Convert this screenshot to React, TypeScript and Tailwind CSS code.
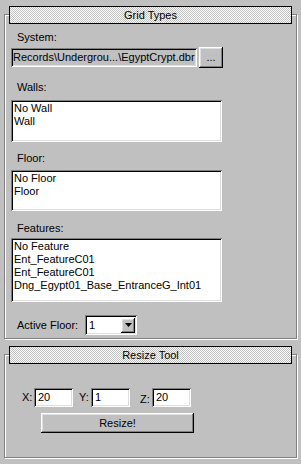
import React from 'react'

const sunken =
  'shadow-[inset_1px_1px_0_#808080,inset_-1px_-1px_0_#ffffff,inset_2px_2px_0_#000000,inset_-2px_-2px_0_#dfdfdf]'
const raised =
  'shadow-[inset_-1px_-1px_0_#000000,inset_1px_1px_0_#ffffff,inset_-2px_-2px_0_#808080,inset_2px_2px_0_#dfdfdf]'

const RolloutTitle = ({ title }: { title: string }) => (
  <div className="relative -mt-[9px] ml-[4px] flex h-[18px] w-[283px] items-center justify-center border border-black bg-[image:repeating-conic-gradient(#c0c0c0_0_25%,#ffffff_0_50%)] bg-[length:2px_2px]">
    <span className="leading-[13px]">{title}</span>
  </div>
)

const ListBox = ({ items, height }: { items: string[]; height: string }) => (
  <div className={`ml-[6px] w-[211px] bg-white pl-[3px] pt-[2px] ${height} ${sunken}`}>
    {items.map((item, i) => (
      <div key={i} className="leading-[13px] whitespace-nowrap">
        {item}
      </div>
    ))}
  </div>
)

const Label = ({ text, mt }: { text: string; mt: string }) => (
  <div className={`ml-[12px] leading-[13px] ${mt}`}>{text}</div>
)

const NumField = ({ value }: { value: string }) => (
  <div className={`flex h-[19px] w-[39px] items-center bg-white pl-[4px] ${sunken}`}>
    <span className="leading-[13px]">{value}</span>
  </div>
)

export default function App() {
  return (
    <div
      className="h-[464px] w-[301px] overflow-hidden bg-[#c0c0c0] pt-[14px] text-[11px] text-black"
      style={{ fontFamily: '"Liberation Sans", Arial, sans-serif' }}
    >
      {/* Grid Types rollout */}
      <div className="ml-[4px] w-[293px] border border-[#808080] pb-[3px] shadow-[inset_1px_1px_0_#ffffff,1px_1px_0_#ffffff]">
        <RolloutTitle title="Grid Types" />

        <Label text="System:" mt="mt-[7px]" />
        <div className="mt-[3px] ml-[6px] flex h-[21px] items-center">
          <div className={`flex h-[19px] w-[186px] items-center overflow-hidden bg-[#c0c0c0] pl-[2px] ${sunken}`}>
            <span className="leading-[13px] whitespace-nowrap">Records\Undergrou...\EgyptCrypt.dbr</span>
          </div>
          <div className={`ml-[2px] flex h-[21px] w-[24px] items-center justify-center ${raised}`}>
            <span className="leading-[13px]">...</span>
          </div>
        </div>

        <Label text="Walls:" mt="mt-[13px]" />
        <div className="mt-[6px]">
          <ListBox items={['No Wall', 'Wall']} height="h-[42px]" />
        </div>

        <Label text="Floor:" mt="mt-[10px]" />
        <div className="mt-[5px]">
          <ListBox items={['No Floor', 'Floor']} height="h-[41px]" />
        </div>

        <Label text="Features:" mt="mt-[11px]" />
        <div className="mt-[3px]">
          <ListBox
            items={['No Feature', 'Ent_FeatureC01', 'Ent_FeatureC01', 'Dng_Egypt01_Base_EntranceG_Int01']}
            height="h-[64px]"
          />
        </div>

        <div className="mt-[13px] ml-[12px] flex h-[20px] items-center">
          <span className="w-[68px] leading-[13px]">Active Floor:</span>
          <div className={`flex h-[20px] w-[52px] items-center justify-between bg-white pl-[4px] pr-[2px] ${sunken}`}>
            <span className="leading-[13px]">1</span>
            <div className={`flex h-[15px] w-[14px] items-center justify-center bg-[#c0c0c0] ${raised}`}>
              <svg width="7" height="4" viewBox="0 0 7 4">
                <path d="M0 0h7L3.5 4z" fill="#000" />
              </svg>
            </div>
          </div>
        </div>
      </div>

      {/* Resize Tool rollout */}
      <div className="mt-[15px] ml-[4px] h-[104px] w-[293px] border border-[#808080] shadow-[inset_1px_1px_0_#ffffff,1px_1px_0_#ffffff]">
        <RolloutTitle title="Resize Tool" />

        <div className="mt-[24px] ml-[17px] flex items-center">
          <span className="w-[12px] leading-[13px]">X:</span>
          <NumField value="20" />
          <span className="ml-[6px] w-[12px] leading-[13px]">Y:</span>
          <NumField value="1" />
          <span className="mt-[4px] ml-[10px] w-[12px] leading-[13px]">Z:</span>
          <NumField value="20" />
        </div>

        <div className={`mt-[6px] ml-[36px] flex h-[20px] w-[153px] items-center justify-center ${raised}`}>
          <span className="leading-[13px]">Resize!</span>
        </div>
      </div>
    </div>
  )
}
